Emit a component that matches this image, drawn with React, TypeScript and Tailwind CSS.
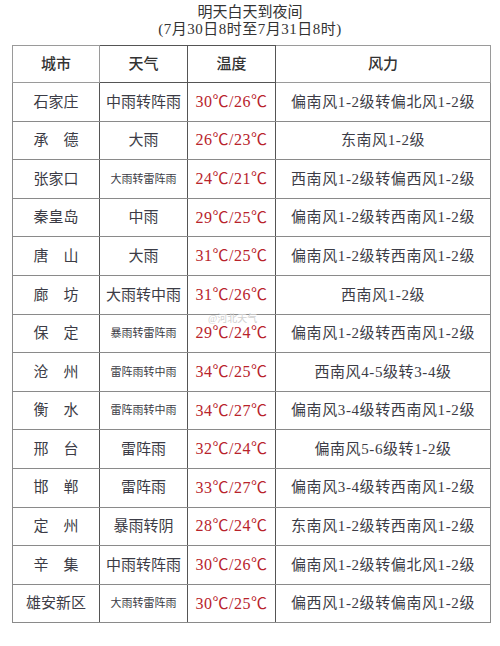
const rows = [
  { city: '石家庄', weather: '中雨转阵雨', small: false, temp: '30℃/26℃', wind: '偏南风1-2级转偏北风1-2级' },
  { city: '承　德', weather: '大雨', small: false, temp: '26℃/23℃', wind: '东南风1-2级' },
  { city: '张家口', weather: '大雨转雷阵雨', small: true, temp: '24℃/21℃', wind: '西南风1-2级转偏西风1-2级' },
  { city: '秦皇岛', weather: '中雨', small: false, temp: '29℃/25℃', wind: '偏南风1-2级转西南风1-2级' },
  { city: '唐　山', weather: '大雨', small: false, temp: '31℃/25℃', wind: '偏南风1-2级转西南风1-2级' },
  { city: '廊　坊', weather: '大雨转中雨', small: false, temp: '31℃/26℃', wind: '西南风1-2级' },
  { city: '保　定', weather: '暴雨转雷阵雨', small: true, temp: '29℃/24℃', wind: '偏南风1-2级转西南风1-2级' },
  { city: '沧　州', weather: '雷阵雨转中雨', small: true, temp: '34℃/25℃', wind: '西南风4-5级转3-4级' },
  { city: '衡　水', weather: '雷阵雨转中雨', small: true, temp: '34℃/27℃', wind: '偏南风3-4级转西南风1-2级' },
  { city: '邢　台', weather: '雷阵雨', small: false, temp: '32℃/24℃', wind: '偏南风5-6级转1-2级' },
  { city: '邯　郸', weather: '雷阵雨', small: false, temp: '33℃/27℃', wind: '偏南风3-4级转西南风1-2级' },
  { city: '定　州', weather: '暴雨转阴', small: false, temp: '28℃/24℃', wind: '东南风1-2级转西南风1-2级' },
  { city: '辛　集', weather: '中雨转阵雨', small: false, temp: '30℃/26℃', wind: '偏南风1-2级转偏北风1-2级' },
  { city: '雄安新区', weather: '大雨转雷阵雨', small: true, temp: '30℃/25℃', wind: '偏西风1-2级转偏南风1-2级' },
];

const font = { fontFamily: '"Liberation Serif", "Noto Sans CJK SC", serif' };

export default function App() {
  return (
    <div className="relative w-[500px] h-[646px] bg-white text-[#3c3c46]" style={font}>
      <div className="pt-[4px] text-center text-[15px] leading-[17px] text-[#333]">
        <div>明天白天到夜间</div>
        <div className="tracking-[0.5px]">(7月30日8时至7月31日8时)</div>
      </div>

      <table className="ml-[12px] mt-[7px] w-[479px] table-fixed border-collapse">
        <colgroup>
          <col className="w-[87px]" />
          <col className="w-[88px]" />
          <col className="w-[88px]" />
          <col />
        </colgroup>
        <thead>
          <tr className="h-[37px] text-[15px] text-[#333]">
            <th className="border border-[#9a9a9a] font-medium">城市</th>
            <th className="border border-[#555] font-medium">天气</th>
            <th className="border border-[#555] font-medium">温度</th>
            <th className="border border-[#9a9a9a] font-medium">风力</th>
          </tr>
        </thead>
        <tbody>
          {rows.map((r) => (
            <tr key={r.city} className="h-[38.6px] text-center">
              <td className="border-y border-l border-[#8a8a8a] border-r-[#555] text-[15px]">{r.city}</td>
              <td
                className={`border border-[#555] border-y-[#8a8a8a] ${r.small ? 'text-[11px]' : 'text-[15px]'}`}
              >
                {r.weather}
              </td>
              <td className="border border-[#555] border-y-[#8a8a8a] text-[16px] text-[#b8232b] tracking-[0.5px]">
                {r.temp}
              </td>
              <td className="border-y border-r border-[#8a8a8a] text-[15px] tracking-[0.6px]">{r.wind}</td>
            </tr>
          ))}
        </tbody>
      </table>

      <div className="pointer-events-none absolute left-[208px] top-[313px] text-[10px] leading-[12px] text-[#d0d0d0]">
        @河北天气
      </div>
    </div>
  );
}
